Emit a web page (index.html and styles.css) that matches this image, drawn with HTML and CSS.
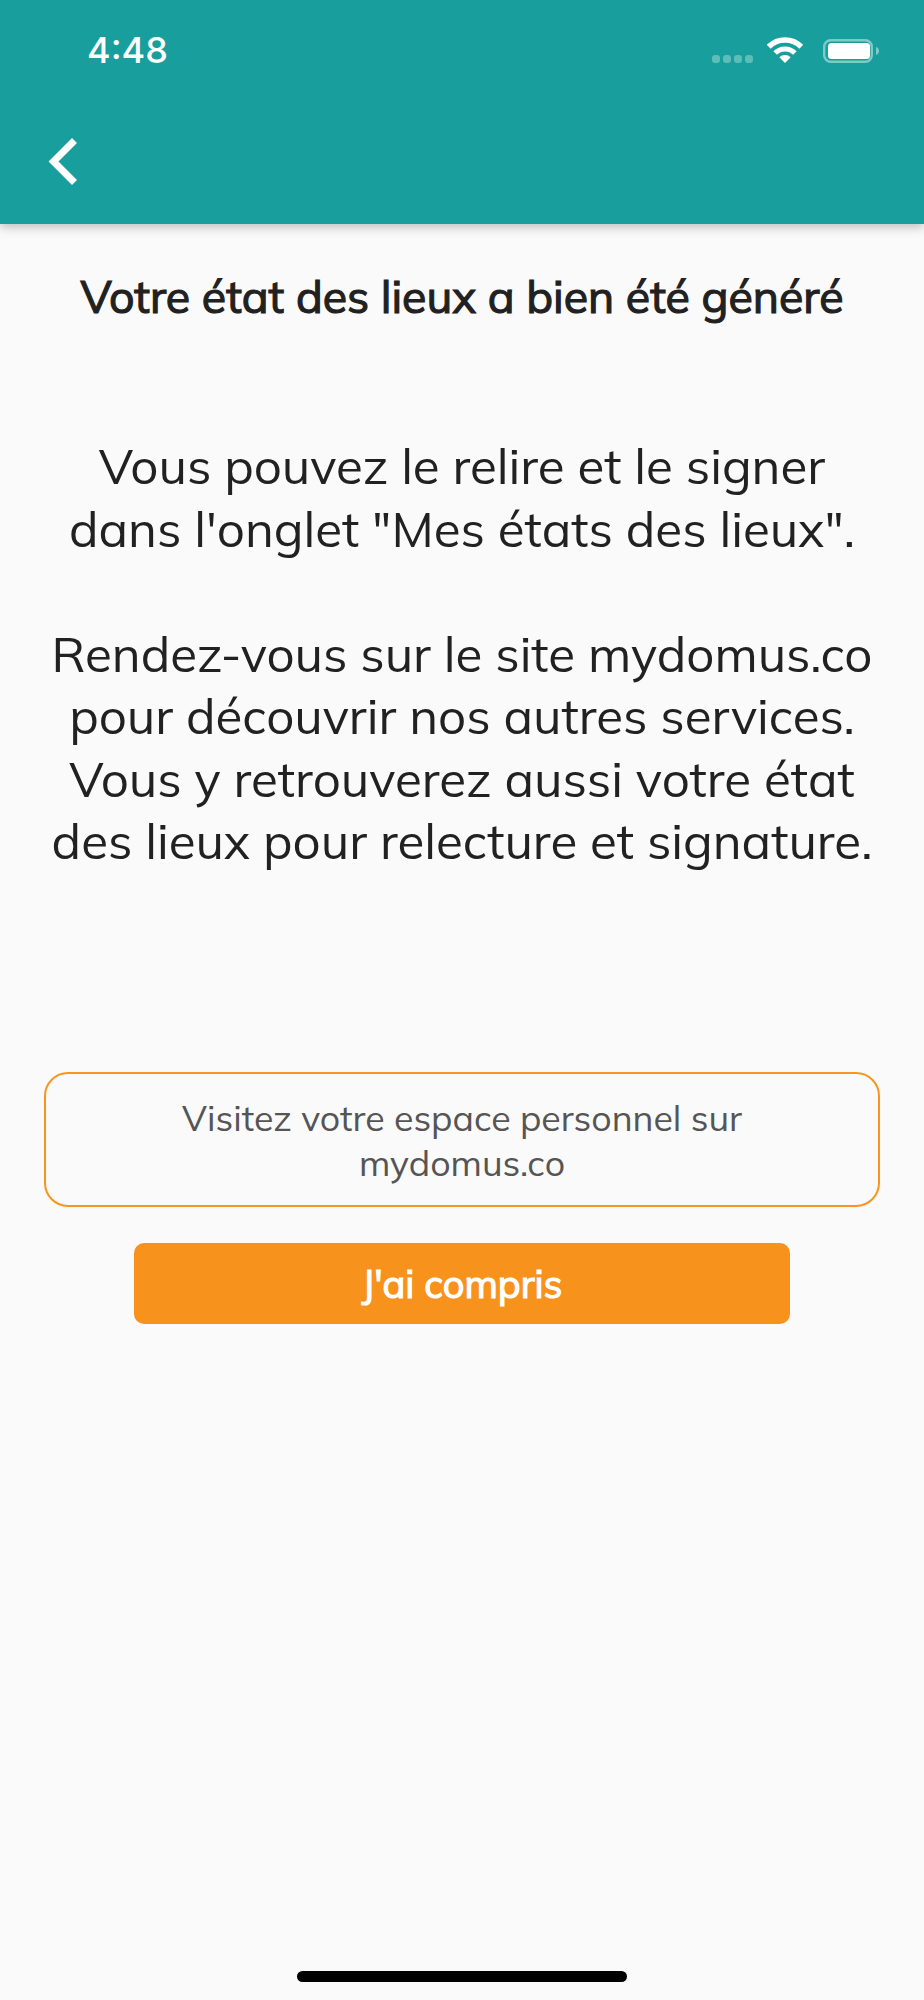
FILE: index.html
```html
<!DOCTYPE html>
<html lang="fr">
<head>
<meta charset="utf-8">
<title>Mydomus</title>
<link rel="stylesheet" href="styles.css">
</head>
<body>
<div class="screen">
  <header class="appbar">
    <div class="status">
      <span class="time">4:48</span>
      <div class="status-icons">
        <svg class="signal" width="41" height="8" viewBox="0 0 41 8"><g fill="#5dbdb8"><rect x="0" y="0" width="8" height="8" rx="3"/><rect x="11" y="0" width="8" height="8" rx="3"/><rect x="22" y="0" width="8" height="8" rx="3"/><rect x="33" y="0" width="8" height="8" rx="3"/></g></svg>
        <svg class="wifi" width="36" height="26" viewBox="0 0 36 26"><g fill="none" stroke="#fff"><path stroke-width="5.500" d="M1.740 9.740A23 23 0 0 1 34.260 9.740"/><path stroke-width="5" d="M8.100 16.100A14 14 0 0 1 27.900 16.100"/></g><path fill="#fff" d="M18 26 12.300 20.300A8 8 0 0 1 23.700 20.300Z"/></svg>
        <svg class="battery" width="56" height="24" viewBox="0 0 56 24"><rect x="1.200" y="1.200" width="47.600" height="21.600" rx="6.500" fill="none" stroke="#7dcbc6" stroke-width="2.400"/><rect x="5" y="4" width="42" height="16" rx="3.500" fill="#fff"/><path d="M53 8c2 .6 3 2.200 3 4s-1 3.400-3 4z" fill="#7dcbc6"/></svg>
      </div>
    </div>
    <div class="toolbar">
      <svg class="back" width="30" height="47" viewBox="0 0 30 47"><path d="M26.500 2.500 5.500 23.500l21 21" fill="none" stroke="#fff" stroke-width="7"/></svg>
    </div>
  </header>
  <main class="content">
    <h1 class="title">Votre état des lieux a bien été généré</h1>
    <div class="message">
      <p>Vous pouvez le relire et le signer<br>dans l'onglet "Mes états des lieux".</p>
      <p>Rendez-vous sur le site mydomus.co<br>pour découvrir nos autres services.<br>Vous y retrouverez aussi votre état<br>des lieux pour relecture et signature.</p>
    </div>
    <a class="visit">Visitez votre espace personnel sur<br>mydomus.co</a>
    <button class="ok">J'ai compris</button>
  </main>
  <div class="home-wrap"><div class="home"></div></div>
</div>
</body>
</html>
```
FILE: styles.css
```css
* { box-sizing: border-box; }
html, body { margin: 0; padding: 0; }
body { background: #fafafa; font-family: "Mulish", "Muli", "Nunito", "Noto Sans", sans-serif; }
.screen { width: 924px; height: 2000px; display: flex; flex-direction: column; background: #fafafa; color: #212121; }
.appbar { height: 224px; background: #189e9c; box-shadow: 0 3px 10px rgba(0,0,0,.25); display: flex; flex-direction: column; color: #fff; }
.status { height: 100px; padding: 29px 45px 0 87px; display: flex; justify-content: space-between; align-items: flex-start; }
.time { font-family: "Inter", sans-serif; font-size: 36px; line-height: 42px; font-weight: 500; }
.status-icons { display: flex; align-items: flex-end; height: 34px; }
.signal { margin-right: 14px; }
.wifi { margin-right: 20px; }
.toolbar { padding: 38px 0 0 48px; }
.back { display: block; }
.content { flex: 1; display: flex; flex-direction: column; align-items: center; }
.title { margin: 43px 0 0; font-size: 44.700px; line-height: 58px; font-weight: 400; -webkit-text-stroke: 1.2px #212121; color: #212121; }
.message { margin-top: 110px; font-size: 49.250px; line-height: 62.500px; font-weight: 380; text-align: center; color: #212121; }
.message p { margin: 0 0 62.500px; }
.visit { margin-top: 137px; width: 836px; height: 135px; border: 2px solid #f9951e; border-radius: 24px; display: flex; align-items: center; justify-content: center; text-align: center; font-size: 35.700px; line-height: 45px; color: #555; }
.ok { margin-top: 36px; width: 656px; height: 81px; border: 0; border-radius: 10px; background: #f7931d; color: #fff; font: 400 38px "Mulish", "Muli", "Nunito", sans-serif; -webkit-text-stroke: 1.2px #fff; }
.home-wrap { height: 29px; display: flex; justify-content: center; }
.home { width: 330px; height: 11px; border-radius: 6px; background: #000; }
```
